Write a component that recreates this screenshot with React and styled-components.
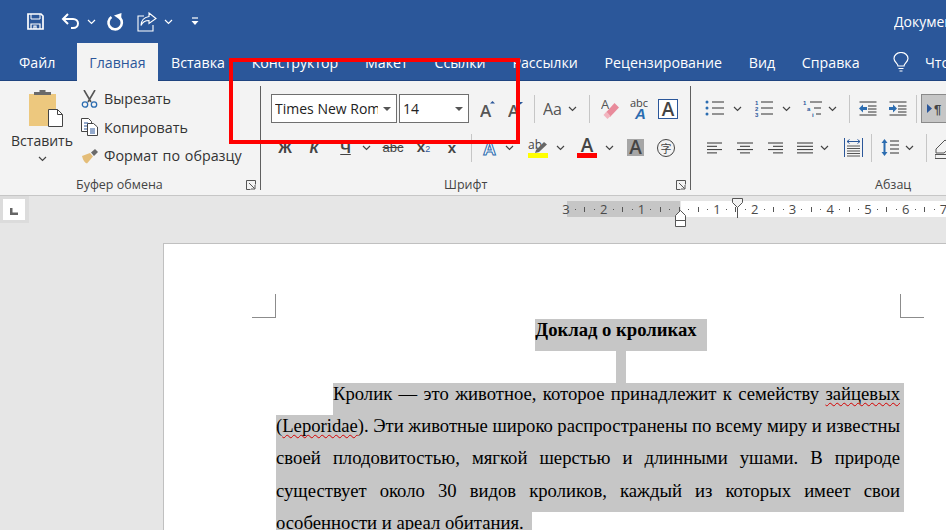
import styled, {createGlobalStyle} from "styled-components";

const Global = createGlobalStyle`
  html, body {
    margin: 0;
    width: 946px;
    height: 530px;
    overflow: hidden;
    background: #e6e6e6;
  }
`;

const UI = `"Open Sans", "Noto Sans", sans-serif`;
const SERIF = `"Liberation Serif", serif`;

const Window = styled.div`
  width: 946px;
  height: 530px;
  position: relative;
  overflow: hidden;
  font-family: ${UI};
  display: flex;
  flex-direction: column;
`;
const TitleBar = styled.div`
  height: 43px;
  flex: none;
  background: #2b579a;
  display: flex;
  align-items: center;
  padding-left: 27px;
`;
const DocTitle = styled.div`
  margin-left: auto;
  width: 52px;
  overflow: hidden;
  white-space: nowrap;
  color: #fff;
  font-size: 14px;
`;
const TabBar = styled.div`
  height: 38px;
  flex: none;
  background: #2b579a;
  box-shadow: inset 0 -1px #1f4480;
  display: flex;
  padding-left: 6px;
  overflow: hidden;
  white-space: nowrap;
`;
const Tab = styled.div`
  padding: 0 13.4px;
  display: flex;
  align-items: center;
  font-size: 14.2px;
  color: #fff;
`;
const FileTab = styled(Tab)`
  padding: 0 22px 0 13px;
`;
const ActiveTab = styled(Tab)`
  padding: 0 12px;
  color: #2b579a;
  background: #f3f3f3;
`;
const TellMe = styled.div`
  margin-left: 20px;
  display: flex;
  align-items: center;
  gap: 16px;
  color: #fff;
  font-size: 14.2px;
`;
const Ribbon = styled.div`
  height: 114px;
  flex: none;
  box-sizing: content-box;
  background: #f3f3f3;
  border-bottom: 1px solid #c6c6c6;
  display: flex;
  color: #333;
`;
const Group = styled.div`
  flex: ${(p) => (p.$w ? "none" : "1")};
  width: ${(p) => (p.$w ? p.$w + "px" : "auto")};
  min-width: 0;
  display: flex;
  flex-direction: column;
  overflow: hidden;
`;
const GroupDivider = styled.div`
  flex: none;
  width: 1px;
  margin: 5px 0;
  background: #5f5f5f;
`;
const ClipBody = styled.div`
  height: 91px;
  display: flex;
`;
const PasteButton = styled.div`
  width: 78px;
  padding-left: 3px;
  padding-top: 9px;
  display: flex;
  flex-direction: column;
  align-items: center;
  font-size: 14px;
`;
const PasteGlyph = styled.div`
  margin-left: 8px;
  line-height: 0;
`;
const PasteLabel = styled.div`
  margin-top: 4px;
  line-height: 20px;
`;
const PasteArrow = styled.div`
  line-height: 0;
  margin-top: 5px;
`;
const ClipList = styled.div`
  padding-top: 3.5px;
  display: flex;
  flex-direction: column;
`;
const ClipItem = styled.div`
  height: 28.5px;
  display: flex;
  align-items: center;
  font-size: 14.3px;
  word-spacing: 1px;
  white-space: nowrap;
`;
const ClipIcon = styled.span`
  width: 23px;
  flex: none;
  display: flex;
`;
const Rows = styled.div`
  padding-top: 13px;
  display: flex;
  flex-direction: column;
  gap: 10px;
`;
const Row = styled.div`
  height: 29px;
  display: flex;
  align-items: center;
  padding-left: 10px;
`;
const Tool = styled.span`
  flex: none;
  width: ${(p) => p.$w}px;
  margin-left: ${(p) => p.$ml || 0}px;
  display: flex;
  align-items: center;
  justify-content: center;
  line-height: 0;
`;
const Sep = styled.span`
  flex: none;
  width: 1px;
  height: 28px;
  margin-left: ${(p) => p.$ml}px;
  background: #c6c6c6;
`;
const Combo = styled.div`
  flex: none;
  box-sizing: border-box;
  width: ${(p) => p.$w}px;
  height: 29px;
  margin-left: ${(p) => p.$ml || 0}px;
  padding: 0 5px 0 3px;
  background: #fff;
  border: 1px solid #6f6f6f;
  display: flex;
  align-items: center;
  justify-content: space-between;
  font-size: 14px;
  color: #222;
`;
const ComboText = styled.span`
  overflow: hidden;
  white-space: nowrap;
  flex: 1;
  min-width: 0;
`;
const ComboCaret = styled.span`
  flex: none;
  width: 0;
  height: 0;
  margin-left: 5px;
  border-left: 4px solid transparent;
  border-right: 4px solid transparent;
  border-top: 4px solid #555;
`;
const Letter = styled.span`
  font-family: "Liberation Sans", sans-serif;
  font-weight: 700;
  font-size: 15px;
  line-height: 16px;
  color: #444;
  font-style: ${(p) => (p.$italic ? "italic" : "normal")};
  text-decoration: ${(p) => p.$line || "none"};
  white-space: nowrap;
`;
const StrikeLetter = styled(Letter)`
  font-weight: 400;
  font-size: 13px;
  text-decoration: line-through;
`;
const Sub = styled.span`
  font-size: 9px;
  color: #2b579a;
  font-weight: 400;
`;
const PilcrowButton = styled.div`
  flex: none;
  box-sizing: border-box;
  width: 34px;
  height: 29px;
  margin-left: 4px;
  padding-left: 5px;
  background: #c6c6c6;
  border: 1px solid #8a8a8a;
  display: flex;
  align-items: center;
`;
const Footer = styled.div`
  margin-top: auto;
  height: 20px;
  display: flex;
  align-items: flex-start;
  padding-right: 4px;
`;
const GroupLabel = styled.span`
  margin-left: ${(p) => p.$ml}px;
  font-size: 12.5px;
  line-height: 20px;
  color: #444;
  white-space: nowrap;
`;
const Launcher = styled.span`
  margin-left: auto;
  padding-top: 5px;
  line-height: 0;
`;

const RulerBar = styled.div`
  height: 47px;
  flex: none;
  display: flex;
  align-items: flex-start;
  background: #e6e6e6;
`;
const TabStop = styled.div`
  width: 29px;
  height: 27px;
  flex: none;
  box-sizing: border-box;
  padding: 3px 4px 3px 3px;
  background: #dcdcdc;
`;
const TabStopInner = styled.div`
  height: 100%;
  background: #fff;
  padding: 9px 0 0 7px;
  box-sizing: border-box;
  line-height: 0;
`;
const Ruler = styled.div`
  position: relative;
  margin: 5px 0 0 538px;
  flex: 1;
  height: 16px;
  background: linear-gradient(to right, #c6c6c6 113px, #e6e6e6 113px, #e6e6e6 114px, #fff 114px);
`;
const Scale = styled.div`
  display: flex;
  height: 100%;
  margin-left: -5.7px;
`;
const Cell = styled.span`
  flex: none;
  width: 9.45px;
  display: flex;
  align-items: center;
  justify-content: center;
  font-size: 13px;
  line-height: 16px;
  color: #4a4a4a;
`;
const Dot = styled.i`
  width: 1px;
  height: 1px;
  background: #555;
`;
const Tick = styled.i`
  width: 1px;
  height: 5px;
  background: #555;
`;
const Marker = styled.svg`
  position: absolute;
  left: ${(p) => p.$x}px;
  top: ${(p) => p.$y}px;
`;

const Workspace = styled.div`
  flex: 1;
  min-height: 0;
  background: #e6e6e6;
  padding-left: 163px;
`;
const Page = styled.div`
  width: 900px;
  height: 100%;
  box-sizing: border-box;
  background: #fff;
  border-top: 1px solid #c0c0c0;
  border-left: 1px solid #c0c0c0;
  padding: 50px 0 0 88px;
  font-family: ${SERIF};
  font-size: 18.67px;
  color: #000;
`;
const CropRow = styled.div`
  width: 672px;
  height: 24px;
  display: flex;
  justify-content: space-between;
`;
const Crop = styled.div`
  width: 23px;
  height: 23px;
  border-bottom: 1px solid #8c8c8c;
  border-left: ${(p) => (p.$right ? "1px solid #8c8c8c" : "none")};
  border-right: ${(p) => (p.$right ? "none" : "1px solid #8c8c8c")};
`;
const Body = styled.div`
  margin: 1px 0 0 24px;
  width: 628px;
`;
const Heading = styled.div`
  height: 32px;
  padding-left: 62px;
  display: flex;
  justify-content: center;
`;
const HeadingText = styled.span`
  background: #c6c6c6;
  padding-right: 10px;
  font-weight: 700;
  line-height: 22px;
`;
const EmptyLine = styled.div`
  height: 32px;
  padding-left: 340px;
`;
const EmptyMark = styled.div`
  width: 10px;
  height: 100%;
  background: #c6c6c6;
`;
const Line = styled.div`
  box-sizing: border-box;
  width: ${(p) => (p.$fit ? "256px" : "auto")};
  height: 32.2px;
  line-height: 21px;
  padding: 0 ${(p) => (p.$fit ? 0 : 4)}px 0 0;
  margin-left: ${(p) => p.$indent || 0}px;
  background: #c6c6c6;
  text-align: justify;
  text-align-last: ${(p) => (p.$fit ? "left" : "justify")};
  word-spacing: ${(p) => (p.$tight ? "-1.6px" : "0")};
`;
const Typo = styled.span`
  text-decoration: underline wavy #d40000 1px;
  text-decoration-skip-ink: none;
  text-underline-offset: 2px;
`;
const Highlight = styled.div`
  position: absolute;
  left: 229px;
  top: 58px;
  width: 291px;
  height: 86px;
  box-sizing: border-box;
  border: 4.5px solid #ff0000;
  pointer-events: none;
`;

const Chevron = ({color = "#444"}) => (
  <svg width="9" height="6" viewBox="0 0 9 6">
    <path d="M1 1l3.5 3.5L8 1" fill="none" stroke={color} strokeWidth="1.2" />
  </svg>
);
const SaveIcon = () => (
  <svg width="17" height="17" viewBox="0 0 17 17" fill="none" stroke="#fff" strokeWidth="1.7">
    <path d="M1 1h13l2 2v13H1z" />
    <path d="M4 1v5h9V1" strokeWidth="1" />
    <path d="M4 16v-5h9v5M7 16v-3h2v3" strokeWidth="1.2" />
  </svg>
);
const UndoIcon = () => (
  <svg width="19" height="17" viewBox="0 0 19 17" fill="none" stroke="#fff" strokeWidth="2">
    <path d="M7 1L2 6l5 5" />
    <path d="M2 6h10c3 0 5 2 5 4.500s-2 4.500-5 4.500H10" />
  </svg>
);
const RedoIcon = () => (
  <svg width="18" height="18" viewBox="0 0 18 18" fill="none" stroke="#fff" strokeWidth="2.6">
    <path d="M5.500 4a6.700 6.700 0 1 0 8.500 1" />
    <path d="M8 2.500L15.500 0 15 7.500z" fill="#fff" stroke="none" />
  </svg>
);
const ShareIcon = () => (
  <svg width="20" height="20" viewBox="0 0 20 20" fill="none" stroke="#fff" strokeWidth="1.100">
    <path d="M7 4H1v15h15v-6" />
    <path d="M12 1l7 5.500-7 5V8.500c-4 0-6.500 1.500-8 5 0-5 3-8 8-9z" />
  </svg>
);
const CustomizeIcon = () => (
  <svg width="8" height="9" viewBox="0 0 8 9">
    <path d="M1 1h6" stroke="#fff" strokeWidth="1.200" />
    <path d="M0.500 4h7L4 8z" fill="#fff" />
  </svg>
);
const BulbIcon = () => (
  <svg width="16" height="20" viewBox="0 0 16 20" fill="none" stroke="#fff" strokeWidth="1.200">
    <path d="M5 14c0-2.500-4-4-4-7.500a7 6 0 0 1 14 0c0 3.500-4 5-4 7.500z" />
    <path d="M5.500 16.500h5M6.500 19h3" />
  </svg>
);
const PasteIcon = () => (
  <svg width="34" height="37" viewBox="0 0 34 37">
    <path d="M0 4h27v32H0z" fill="#edc87e" />
    <path d="M5 5h17v-3h-5.500V0h-6v2H5z" fill="#6a6a6a" />
    <path d="M19.500 19.500h9l5 5v12h-14z" fill="#fff" stroke="#444" strokeWidth="1" />
    <path d="M28.500 19.500v5h5" fill="none" stroke="#444" strokeWidth="1" />
  </svg>
);
const CutIcon = () => (
  <svg width="17" height="18" viewBox="0 0 17 18" fill="none">
    <path d="M3 0l7 12M14 0L7 12" stroke="#555" strokeWidth="1.600" />
    <circle cx="4" cy="14.500" r="2.700" stroke="#2b6cb0" strokeWidth="1.300" />
    <circle cx="13" cy="14.500" r="2.700" stroke="#2b6cb0" strokeWidth="1.300" />
  </svg>
);
const CopyIcon = () => (
  <svg width="17" height="18" viewBox="0 0 17 18" fill="#fff" stroke="#444" strokeWidth="1">
    <path d="M0.500 0.500h7l3 3v10h-10z" />
    <path d="M6.500 5.500h6l4 3.500v8.500h-10z" />
    <path d="M3 5h4M3 8h3M3 11h3M9 11h5M9 13h5M9 15h5" stroke="#2b579a" />
  </svg>
);
const PainterIcon = () => (
  <svg width="18" height="16" viewBox="0 0 18 16">
    <path d="M1 8l8-3 3 3.500-6 7c-2-.5-4-3-5-7.500z" fill="#e4bd78" />
    <path d="M10 4.500l4-3.500 3 3-4 4z" fill="#6a6a6a" />
  </svg>
);
const LauncherIcon = () => (
  <svg width="10" height="10" viewBox="0 0 10 10" fill="none" stroke="#555">
    <path d="M9.500 4.500v-4h-9v9h4" />
    <path d="M3 3l5.500 5.500M9 5v4H5" />
  </svg>
);
const GrowIcon = ({down}) => (
  <svg width="15" height="18" viewBox="0 0 15 18">
    <text x="0" y="17" fontFamily="Open Sans, sans-serif" fontWeight="600" fontSize="17" fill="#555">A</text>
    <path d={down ? "M10 2h5l-2.500 2.500z" : "M10 3.500h5L12.500 1z"} fill="#2b579a" />
  </svg>
);
const CaseIcon = () => (
  <svg width="20" height="18" viewBox="0 0 20 18">
    <text x="0" y="15" fontFamily="Open Sans, sans-serif" fontSize="16" fill="#555">Aa</text>
  </svg>
);
const EraserIcon = () => (
  <svg width="18" height="22" viewBox="0 0 18 22">
    <text x="0" y="11" fontFamily="Open Sans, sans-serif" fontSize="13" fill="#555">A</text>
    <path d="M13.500 5l4.500 4.500-9 9.500-4-4.500z" fill="#e88a9a" />
    <path d="M2.500 17l3-3.500 4 4.500-3 3z" fill="#f2b5bf" />
  </svg>
);
const StylesIcon = () => (
  <svg width="18" height="22" viewBox="0 0 18 22">
    <text x="0" y="9" fontFamily="Open Sans, sans-serif" fontSize="11" fill="#444">abc</text>
    <text x="5" y="21" fontFamily="Liberation Sans, sans-serif" fontWeight="700" fontStyle="italic" fontSize="15" fill="#2b6cb0">A</text>
  </svg>
);
const BoxedAIcon = () => (
  <svg width="20" height="20" viewBox="0 0 20 20">
    <rect x="0.500" y="0.500" width="19" height="19" fill="#fff" stroke="#2b579a" />
    <text x="10" y="16.500" textAnchor="middle" fontFamily="Open Sans, sans-serif" fontWeight="600" fontSize="19" fill="#444">A</text>
  </svg>
);
const EffectsIcon = () => (
  <svg width="16" height="18" viewBox="0 0 16 18">
    <text x="1" y="16" fontFamily="Liberation Sans, sans-serif" fontWeight="700" fontSize="18" fill="#fff" stroke="#2b6cb0" strokeWidth="1">A</text>
  </svg>
);
const MarkerIcon = () => (
  <svg width="20" height="20" viewBox="0 0 20 20">
    <text x="0" y="11" fontFamily="Open Sans, sans-serif" fontSize="12" fill="#444">ab</text>
    <path d="M8 12l8-8 3 2.500-8 7.500-4 1z" fill="#666" />
    <rect y="15" width="20" height="5" fill="#ffff00" />
  </svg>
);
const ColorAIcon = () => (
  <svg width="20" height="20" viewBox="0 0 20 20">
    <text x="10" y="14" textAnchor="middle" fontFamily="Open Sans, sans-serif" fontWeight="600" fontSize="19" fill="#444">A</text>
    <rect y="15" width="20" height="5" fill="#ff0000" />
  </svg>
);
const ShadedAIcon = () => (
  <svg width="17" height="17" viewBox="0 0 17 17">
    <rect width="17" height="17" fill="#a6a6a6" />
    <text x="8.500" y="15" textAnchor="middle" fontFamily="Open Sans, sans-serif" fontWeight="600" fontSize="19" fill="#444">A</text>
  </svg>
);
const PhoneticIcon = () => (
  <svg width="18" height="18" viewBox="0 0 18 18">
    <circle cx="9" cy="9" r="8.500" fill="none" stroke="#444" />
    <text x="3.500" y="13.500" fontFamily="Noto Sans CJK SC, sans-serif" fontSize="11" fill="#444">字</text>
  </svg>
);
const ListLines = ({x = 7, y = [2, 8, 14], w = 12}) =>
  y.map((v) => <path key={v} d={`M${x} ${v}h${w}`} stroke="#333" />);
const BulletsIcon = () => (
  <svg width="19" height="17" viewBox="0 0 19 17">
    <circle cx="2" cy="2" r="1.500" fill="#2b6cb0" />
    <circle cx="2" cy="8" r="1.500" fill="#2b6cb0" />
    <circle cx="2" cy="14" r="1.500" fill="#2b6cb0" />
    <ListLines />
  </svg>
);
const NumberIcon = () => (
  <svg width="18" height="17" viewBox="0 0 18 17">
    <g fontFamily="Liberation Sans, sans-serif" fontWeight="700" fontSize="6" fill="#2b579a">
      <text x="0" y="5">1</text>
      <text x="0" y="11">2</text>
      <text x="0" y="17">3</text>
    </g>
    <ListLines x={6} />
  </svg>
);
const MultiIcon = () => (
  <svg width="19" height="17" viewBox="0 0 19 17">
    <g fontFamily="Liberation Sans, sans-serif" fontWeight="700" fontSize="6" fill="#2b579a">
      <text x="0" y="5">1</text>
      <text x="4" y="11">a</text>
      <text x="9" y="17">i</text>
    </g>
    <path d="M7 2h12M11 8h7M13 14h5" stroke="#333" />
  </svg>
);
const IndentIcon = ({out}) => (
  <svg width="18" height="15" viewBox="0 0 18 15">
    <path d="M0.500 1h17M9 5h8.500M9 8h8.500M9 11h8.500M0.500 14h17" stroke="#333" />
    <path
      d={out ? "M0 7.500l4-4v2.500h4v3h-4v2.500z" : "M8 7.500l-4-4v2.500H0v3h4v2.500z"}
      fill="#2b6cb0"
    />
  </svg>
);
const AlignIcon = ({rows}) => (
  <svg width="16" height="12" viewBox="0 0 16 12">
    {rows.map(([x, w], i) => (
      <path key={i} d={`M${x} ${1 + i * 3.300}h${w}`} stroke="#333" />
    ))}
  </svg>
);
const DistributeIcon = () => (
  <svg width="19" height="19" viewBox="0 0 19 19">
    <path d="M0.500 0v19M18.500 0v19" stroke="#2b579a" />
    <path d="M3 3.500h13M3 3.500l2.500-2M3 3.500l2.500 2M16 3.500l-2.500-2M16 3.500l-2.500 2" stroke="#2b579a" fill="none" />
    <path d="M3 8h13M3 10.500h13M3 13h13M3 15.500h13M3 18h13" stroke="#555" />
  </svg>
);
const SpacingIcon = () => (
  <svg width="18" height="19" viewBox="0 0 18 19">
    <path d="M3.500 1l3 4h-2v9h2l-3 4-3-4h2V5h-2z" fill="#2b6cb0" />
    <path d="M9 3h9M9 7h9M9 11h9M9 15h9" stroke="#333" />
  </svg>
);
const PilcrowIcon = () => (
  <svg width="20" height="14" viewBox="0 0 20 14">
    <path d="M0 2l5 4.500L0 11z" fill="#2b579a" />
    <text x="7" y="12" fontFamily="Liberation Sans, sans-serif" fontWeight="700" fontSize="13" fill="#444">¶</text>
  </svg>
);
const ShadingIcon = () => (
  <svg width="20" height="24" viewBox="0 0 20 24" fill="none" stroke="#555">
    <path d="M1 13l9-9 7 6-8 7H1z" />
    <path d="M0 18.500h20v4H0z" fill="#f3f3f3" />
  </svg>
);

const SCALE = [3, 2, 1, 0, 1, 2, 3, 4, 5, 6, 7];

const RulerCells = () => {
  const cells = [];
  SCALE.forEach((n, i) => {
    cells.push(<Cell key={i + "n"}>{n === 0 ? <Tick /> : n}</Cell>);
    if (i < SCALE.length - 1) {
      cells.push(<Cell key={i + "a"}><Dot /></Cell>);
      cells.push(<Cell key={i + "b"}><Tick /></Cell>);
      cells.push(<Cell key={i + "c"}><Dot /></Cell>);
    }
  });
  return cells;
};

const TABS = ["Вставка", "Конструктор", "Макет", "Ссылки", "Рассылки", "Рецензирование", "Вид", "Справка"];

const App = () => {
  return (
    <Window>
      <Global />
      <TitleBar>
        <Tool $w={17}><SaveIcon /></Tool>
        <Tool $w={19} $ml={17}><UndoIcon /></Tool>
        <Tool $w={9} $ml={7}><Chevron color="#fff" /></Tool>
        <Tool $w={18} $ml={10}><RedoIcon /></Tool>
        <Tool $w={20} $ml={13}><ShareIcon /></Tool>
        <Tool $w={9} $ml={7}><Chevron color="#fff" /></Tool>
        <Tool $w={8} $ml={18}><CustomizeIcon /></Tool>
        <DocTitle>Документ1 - Word</DocTitle>
      </TitleBar>
      <TabBar>
        <FileTab>Файл</FileTab>
        <ActiveTab>Главная</ActiveTab>
        {TABS.map((t) => <Tab key={t}>{t}</Tab>)}
        <TellMe><BulbIcon />Что вы хотите сделать?</TellMe>
      </TabBar>

      <Ribbon>
        <Group $w={260}>
          <ClipBody>
            <PasteButton>
              <PasteGlyph><PasteIcon /></PasteGlyph>
              <PasteLabel>Вставить</PasteLabel>
              <PasteArrow><Chevron /></PasteArrow>
            </PasteButton>
            <ClipList>
              <ClipItem><ClipIcon><CutIcon /></ClipIcon>Вырезать</ClipItem>
              <ClipItem><ClipIcon><CopyIcon /></ClipIcon>Копировать</ClipItem>
              <ClipItem><ClipIcon><PainterIcon /></ClipIcon>Формат по образцу</ClipItem>
            </ClipList>
          </ClipBody>
          <Footer>
            <GroupLabel $ml={76}>Буфер обмена</GroupLabel>
            <Launcher><LauncherIcon /></Launcher>
          </Footer>
        </Group>
        <GroupDivider />

        <Group $w={429}>
          <Rows>
            <Row>
              <Combo $w={126}><ComboText>Times New Roman</ComboText><ComboCaret /></Combo>
              <Combo $w={70} $ml={2}><ComboText>14</ComboText><ComboCaret /></Combo>
              <Tool $w={15} $ml={11}><GrowIcon /></Tool>
              <Tool $w={15} $ml={13}><GrowIcon down /></Tool>
              <Sep $ml={11} />
              <Tool $w={20} $ml={8}><CaseIcon /></Tool>
              <Tool $w={9} $ml={5}><Chevron /></Tool>
              <Sep $ml={12} />
              <Tool $w={18} $ml={11}><EraserIcon /></Tool>
              <Tool $w={18} $ml={11}><StylesIcon /></Tool>
              <Tool $w={20} $ml={10}><BoxedAIcon /></Tool>
            </Row>
            <Row>
              <Tool $w={16} $ml={6}><Letter>Ж</Letter></Tool>
              <Tool $w={12} $ml={15}><Letter $italic>К</Letter></Tool>
              <Tool $w={13} $ml={19}><Letter $line="underline">Ч</Letter></Tool>
              <Tool $w={9} $ml={10}><Chevron /></Tool>
              <Tool $w={20} $ml={12}><StrikeLetter>abc</StrikeLetter></Tool>
              <Tool $w={15} $ml={13}><Letter>x<Sub>2</Sub></Letter></Tool>
              <Tool $w={12} $ml={15}><Letter>x</Letter></Tool>
              <Sep $ml={13} />
              <Tool $w={16} $ml={10}><EffectsIcon /></Tool>
              <Tool $w={9} $ml={6.500}><Chevron /></Tool>
              <Tool $w={20} $ml={14.500}><MarkerIcon /></Tool>
              <Tool $w={9} $ml={7.500}><Chevron /></Tool>
              <Tool $w={20} $ml={12.500}><ColorAIcon /></Tool>
              <Tool $w={9} $ml={7.500}><Chevron /></Tool>
              <Tool $w={17} $ml={13.500}><ShadedAIcon /></Tool>
              <Tool $w={18} $ml={13}><PhoneticIcon /></Tool>
            </Row>
          </Rows>
          <Footer>
            <GroupLabel $ml={183}>Шрифт</GroupLabel>
            <Launcher><LauncherIcon /></Launcher>
          </Footer>
        </Group>
        <GroupDivider />

        <Group>
          <Rows>
            <Row>
              <Tool $w={19} $ml={4}><BulletsIcon /></Tool>
              <Tool $w={9} $ml={9}><Chevron /></Tool>
              <Tool $w={18} $ml={13}><NumberIcon /></Tool>
              <Tool $w={9} $ml={8.500}><Chevron /></Tool>
              <Tool $w={19} $ml={12.500}><MultiIcon /></Tool>
              <Tool $w={9} $ml={5.500}><Chevron /></Tool>
              <Sep $ml={12.500} />
              <Tool $w={18} $ml={9}><IndentIcon out /></Tool>
              <Tool $w={18} $ml={12}><IndentIcon /></Tool>
              <Sep $ml={9} />
              <PilcrowButton><PilcrowIcon /></PilcrowButton>
            </Row>
            <Row>
              <Tool $w={16} $ml={6}><AlignIcon rows={[[0, 15], [0, 10], [0, 15], [0, 10]]} /></Tool>
              <Tool $w={16} $ml={14}><AlignIcon rows={[[0, 16], [3, 10], [0, 16], [3, 10]]} /></Tool>
              <Tool $w={16} $ml={14}><AlignIcon rows={[[1, 15], [6, 10], [1, 15], [6, 10]]} /></Tool>
              <Tool $w={16} $ml={14}><AlignIcon rows={[[0, 16], [0, 16], [0, 16], [0, 16]]} /></Tool>
              <Tool $w={9} $ml={6.500}><Chevron /></Tool>
              <Tool $w={19} $ml={15}><DistributeIcon /></Tool>
              <Sep $ml={8.500} />
              <Tool $w={18} $ml={9}><SpacingIcon /></Tool>
              <Tool $w={9} $ml={5.500}><Chevron /></Tool>
              <Sep $ml={12.500} />
              <Tool $w={20} $ml={8}><ShadingIcon /></Tool>
            </Row>
          </Rows>
          <Footer>
            <GroupLabel $ml={184}>Абзац</GroupLabel>
          </Footer>
        </Group>
      </Ribbon>

      <RulerBar>
        <TabStop>
          <TabStopInner>
            <svg width="8" height="7" viewBox="0 0 8 7">
              <path d="M0 0h2.500v4.500H8V7H0z" fill="#666" />
            </svg>
          </TabStopInner>
        </TabStop>
        <Ruler>
          <Scale><RulerCells /></Scale>
          <Marker $x={165} $y={-3} width="12" height="20" viewBox="0 0 12 20">
            <path d="M0.500 0.500h10v4L5.500 9.500l-5-5z" fill="#f3f3f3" stroke="#555" />
            <path d="M5.500 9.500V20" stroke="#555" />
          </Marker>
          <Marker $x={108} $y={9} width="12" height="17" viewBox="0 0 12 17">
            <path d="M0.500 5.500l5-5 5 5v5h-10zM0.500 10.500h10v6h-10z" fill="#fff" stroke="#555" />
          </Marker>
        </Ruler>
      </RulerBar>

      <Workspace>
        <Page>
          <CropRow>
            <Crop />
            <Crop $right />
          </CropRow>
          <Body>
            <Heading><HeadingText>Доклад о кроликах</HeadingText></Heading>
            <EmptyLine><EmptyMark /></EmptyLine>
            <Line $indent={57}>Кролик — это животное, которое принадлежит к семейству <Typo>зайцевых</Typo></Line>
            <Line $tight>(<Typo>Leporidae</Typo>). Эти животные широко распространены по всему миру и известны</Line>
            <Line>своей плодовитостью, мягкой шерстью и длинными ушами. В природе</Line>
            <Line>существует около 30 видов кроликов, каждый из которых имеет свои</Line>
            <Line $fit>особенности и ареал обитания.</Line>
          </Body>
        </Page>
      </Workspace>

      <Highlight />
    </Window>
  );
};

export default App;
